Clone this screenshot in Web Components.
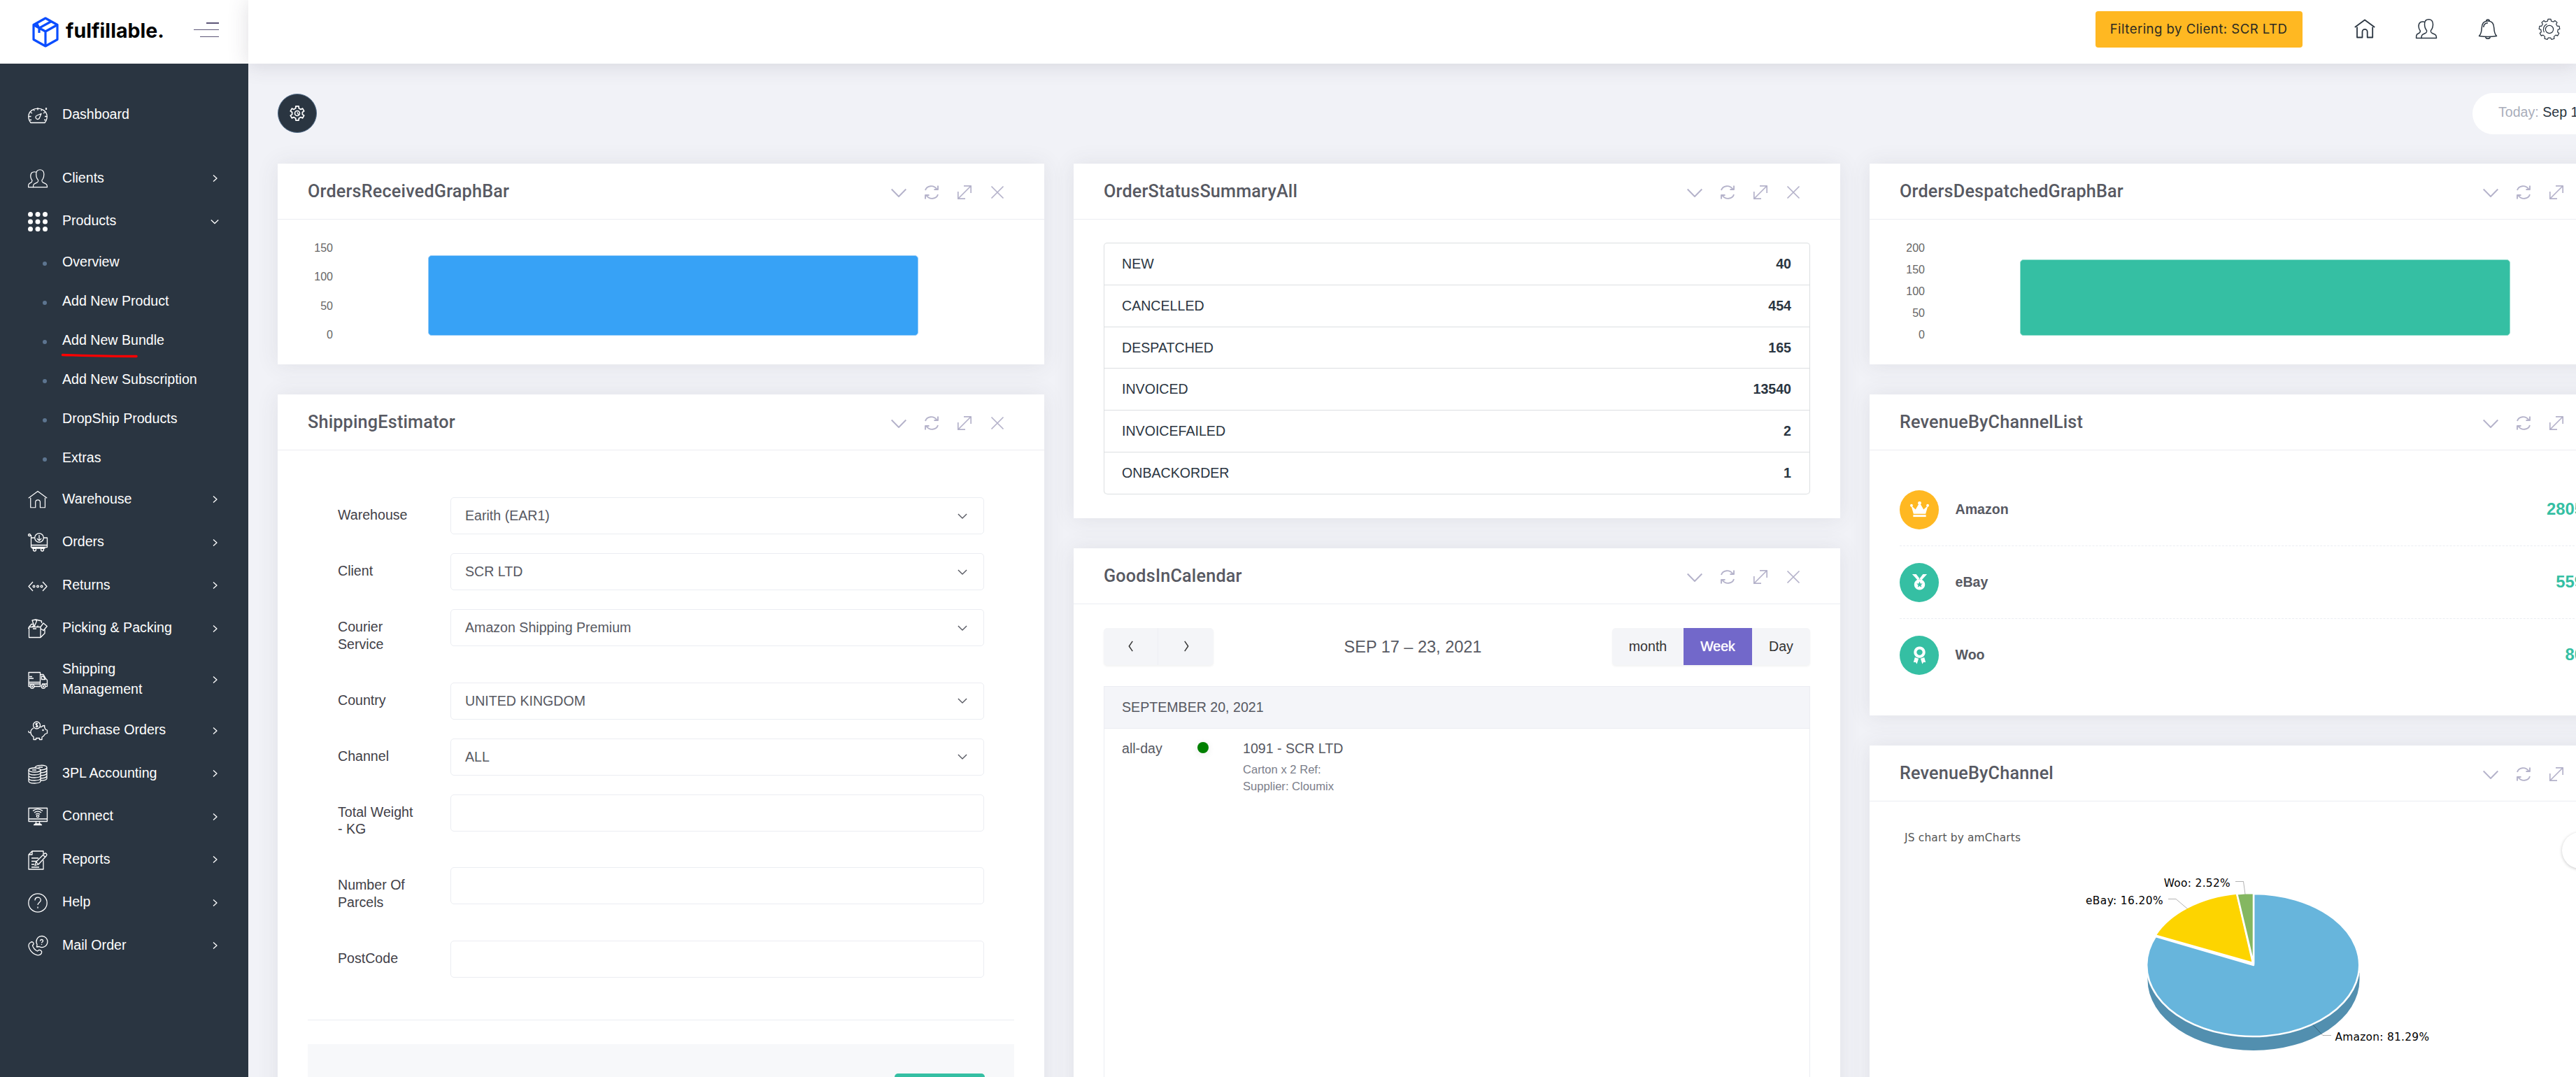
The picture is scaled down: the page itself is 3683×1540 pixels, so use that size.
<!DOCTYPE html>
<html lang="en">
<head>
<meta charset="utf-8">
<title>fulfillable.</title>
<style>
  html, body {
    margin: 0;
    height: 100%;
    overflow: hidden;
  }
  body {
    font-family: "Liberation Sans", Arial, sans-serif;
    font-size: 19.6px;
    color: #2a3541;
    background: #f1f2f7;
  }
</style>
</head>
<body>
<app-shell>
  <top-bar slot="top"></top-bar>
  <side-menu slot="side"></side-menu>

  <div slot="col1">
    <widget-card heading="OrdersReceivedGraphBar">
      <bar-chart labels="150,100,50,0" height="115" color="#37a2f6" edge="#98cdf8"></bar-chart>
    </widget-card>
    <widget-card heading="ShippingEstimator">
      <shipping-form></shipping-form>
    </widget-card>
  </div>

  <div slot="col2">
    <widget-card heading="OrderStatusSummaryAll">
      <status-list>
        <status-row count="40">NEW</status-row>
        <status-row count="454">CANCELLED</status-row>
        <status-row count="165">DESPATCHED</status-row>
        <status-row count="13540">INVOICED</status-row>
        <status-row count="2">INVOICEFAILED</status-row>
        <status-row count="1">ONBACKORDER</status-row>
      </status-list>
    </widget-card>
    <widget-card heading="GoodsInCalendar">
      <goods-calendar></goods-calendar>
    </widget-card>
  </div>

  <div slot="col3">
    <widget-card heading="OrdersDespatchedGraphBar">
      <bar-chart labels="200,150,100,50,0" height="109" color="#35bfa3" edge="#8ddccb"></bar-chart>
    </widget-card>
    <widget-card heading="RevenueByChannelList">
      <revenue-list>
        <revenue-row icon="crown" color="#ffb822" amount="2805">Amazon</revenue-row>
        <revenue-row icon="medal" color="#35bfa3" amount="559">eBay</revenue-row>
        <revenue-row icon="award" color="#35bfa3" amount="80">Woo</revenue-row>
      </revenue-list>
    </widget-card>
    <widget-card heading="RevenueByChannel">
      <pie-chart></pie-chart>
    </widget-card>
  </div>
</app-shell>

<script>
// outline of a cog, n teeth between radius a and b
function cog(c, a, b, n) {
  const pts = [];
  const step = Math.PI * 2 / n;
  for (let i = 0; i < n; i++) {
    [[-0.3, a], [-0.2, b], [0.2, b], [0.3, a]].forEach(([o, r]) => {
      const t = (i + o) * step;
      pts.push((c + r * Math.sin(t)).toFixed(2) + ' ' + (c - r * Math.cos(t)).toFixed(2));
    });
  }
  return 'M' + pts.join('L') + 'z';
}

// every icon: [viewBox size, markup]
const icons = {
  box: [44, '<g stroke="#0b4dff" stroke-width="3.2"><path d="M22 2L39 11.500V32.500L22 42 5 32.500V11.500z"/><path d="M5 11.500L22 21 39 11.500M22 21V42M13 16.200L30.500 6.500M9.500 9.500L13 16.200V23"/></g>'],
  home: [30, '<path d="M.8 12L15 1.500 29.200 12"/><path d="M4 11.500V26.500H11.500V18.500a3.600 3.600 0 0 1 7.200 0V26.500H26.200V11.500"/>'],
  users: [30, '<path d="M8 27.500h21.500c0-4-1-5-5-6.500-3-1.200-3.500-2-3-4.500 2.500-2.500 3-6 3-9C24.500 3 22 .8 18.500.8S12.500 3 12.500 7.500c0 3 .6 6.500 3 9 .5 2.500 0 3.300-3 4.500-4 1.500-4.500 2.500-4.500 6.500z"/><path d="M12.800 4.600C11.500 4 8.500 4 6.500 4.800 4.500 6 4 8 4 10.500c0 2.500.8 4.500 2.300 6.500.4 2-.3 3-2.800 4C1 22.200.6 23.200.6 27.500h8"/>'],
  bell: [30, '<path d="M12.500 3a2.600 2.600 0 0 1 5 0M2.500 24.500C5 22 6 19 6.200 13 6.500 6 10 3 15 3s8.500 3 8.800 10c.2 6 1.200 9 3.700 11.500-7 1.200-18 1.200-25 0zM11.500 25.500c.8 3.800 6.200 3.800 7 0M8.800 12C9 8.500 11 6 15 5.800"/>'],
  cog: [30, `<path d="${cog(15, 12.2, 14.8, 9)}"/><circle cx="15" cy="15" r="5.600"/><path d="M11.500 7.200a8.500 8.500 0 0 0-4 12"/>`],
  cogSmall: [24, `<path stroke-width="1.900" d="${cog(12, 8.2, 11.2, 6)}"/><circle cx="12" cy="12" r="3.800" stroke-width="1.800"/><path stroke-width="1.500" d="M12 10.500l2 4"/>`],
  gauge: [28, '<path d="M4 24.500h20c3-3.500 3.700-7.500 3-11.500A13.200 10.800 0 0 0 1 13c-.7 4 0 8 3 11.500z"/><path d="M14 3v3.500M8 5l1.200 2.500M3.500 9.500L6 11M1 15.500h3.500M27.500 15.500H24M2.500 20.500h2.500M25.500 20.500H23M20 5l-1.200 2.500M24.500 9.500L22 11"/><path d="M19 11.500l-2.500 6a2.800 2.800 0 1 1-3.500-3.500z"/><path d="M25 3.500l2 2M27 3.500l-2 2"/>'],
  dots: [28, '<g fill="#fff" stroke="none"><circle cx="3.500" cy="3.500" r="3.500"/><circle cx="14" cy="3.500" r="3.500"/><circle cx="24.500" cy="3.500" r="3.500"/><circle cx="3.500" cy="14" r="3.500"/><circle cx="14" cy="14" r="3.500"/><circle cx="24.500" cy="14" r="3.500"/><circle cx="3.500" cy="24.500" r="3.500"/><circle cx="14" cy="24.500" r="3.500"/><circle cx="24.500" cy="24.500" r="3.500"/></g>'],
  cart: [28, '<circle cx="2" cy="3" r="1.500"/><path d="M3.500 3.500h1V20.500H27.500V7H22M9.500 7H5M4.500 17.500h23M5.500 22h19"/><circle cx="16" cy="7" r="6.300"/><path d="M16 3v7.500M12.800 8l3.200 3 3.200-3"/><circle cx="9.500" cy="24" r="2"/><circle cx="20.500" cy="24" r="2"/>'],
  returns: [28, '<path d="M7 8L1 14.500 7 21M21 8l6 6.500L21 21"/><circle cx="8.500" cy="14.500" r="1.400"/><circle cx="14" cy="14.500" r="1.400"/><circle cx="19.500" cy="14.500" r="1.400"/>'],
  parcel: [28, '<path d="M1.500 11.500H18V26.500H1.500zM18 26.500l6-6V14M1.500 11.500L.5 14M1.500 11.500L5 7.500h3M6.500 11L8.500 9 6 2l5-1 1.500 2L9 11M12.500 3L11.500 1l8 2v3M14 9.500V11M18 11.500l4-5.500 5.300 4.500L22 16.500 18.500 14M7 14h5"/>'],
  truck: [28, '<path d="M3 23.500H1V3.500H17.500V23.500H8.500M17.500 6.500h4.500l3.500 6 2 2V23.500h-2M19.500 13.500V9H22l2.500 4.500zM1 17.500h16M1 20h16M2 9.500h4M2 12h6M20 20h7"/><circle cx="6" cy="23.500" r="2.800"/><circle cx="22" cy="23.500" r="2.800"/><circle cx="6" cy="23.500" r=".7"/><circle cx="22" cy="23.500" r=".7"/>'],
  piggy: [28, '<circle cx="12.500" cy="6" r="5"/><path d="M14 4.200c-.8-1.200-3-1-3 .3 0 1.500 3 1.200 3 2.900 0 1.400-2.500 1.300-3 .1M12.500 2.800v6.400"/><path d="M8 10c-3 1.500-4.500 4-4 7 .4 3 2 4.500 4 5.500v4h3.500v-2h5v2H20v-3.500c2-1 3.500-2.500 4.500-4.500l3-1v-4.500l-2.500-1c-.3-1-.6-2-1.300-2.800V6.500c-2 0-3.700.8-4.500 2h-2M3.500 16.500c-2 .5-3-.5-2.500-2.500"/><circle cx="21.500" cy="13" r=".6"/>'],
  coins: [28, '<ellipse cx="9.500" cy="8" rx="8.500" ry="3"/><path d="M1 8v16c0 4 17 4 17 0V8M1 12c0 4 17 4 17 0M1 16c0 4 17 4 17 0M1 20c0 4 17 4 17 0M10 5C10 .2 27 .2 27 4v16c0 2-4.500 3-9 3M18 8c5 0 9-1.500 9-4M18 12c5 0 9-1.500 9-4M18 16c5 0 9-1.500 9-4M18 20c5 0 9-1.500 9-4M6 8h6M15 4h6"/>'],
  monitor: [28, '<path d="M1 1.500H27.500V20.500H1zM1 17h26.500M11.500 20.500v3.500M16.500 20.500v3.500M8.500 25.500l2-1.500h7l2 1.500z"/><circle cx="14" cy="13" r="1.700"/><path d="M11 10.500a4.500 4.500 0 0 1 6 0M9 8a7.500 7.500 0 0 1 10 0M7 5.500a10.500 10.500 0 0 1 14 0"/>'],
  report: [28, '<path d="M22 14V27H1V6L6 1H22V5M6 1v5H1M5 11h10M5 15.500h8M5 20h4M5 24h11"/><path d="M10 21.500l1.500-5L23.500 4.500c2-1.500 4.500 1 3 3L15 20zM11.500 16.500L15 20M21.500 6.500L25 10"/>'],
  help: [28, '<circle cx="14" cy="14" r="13.200"/><path d="M10 10.500c0-6 8.300-5.500 8.300-.5 0 3.200-4.300 3.700-4.300 7M14 19.500v2.300"/>'],
  phone: [28, '<path d="M4 8.500c2-2 4.500.5 4 2.500l-1.500 2c.5 3 4 7 7 8l2-1.500c2.500-.5 5 2 4 4-1.500 4-6 4-10 1.800C5 23 1.500 18 1 14c-.3-2.500 1-4.500 3-5.500z"/><path d="M12.500 15l.5-3.500a8 8 0 1 1 3 3z"/><path d="M17.500 6.500c0-2.800 4-2.500 4 0 0 1.500-2 1.500-2 3M19.500 11v1"/>'],
  right: [12, '<path d="M4 1.500L9 6l-5 4.500"/>'],
  down: [12, '<path d="M.8 3.500L6 8.500l5.200-5"/>'],
  chevron: [22, '<path d="M.7 6.500L11 17 21.300 6.500"/>'],
  refresh: [22, '<path d="M2 8C4 1 14 0 18.500 6.500M20 14C18 21 8 22 3.500 15.500M20 1.500v5.500h-5.500M2 20.500v-5.500h5.500"/>'],
  expand: [22, '<path d="M2 20L20 2M10 1.800h10.200V12M1.800 10v10.200H12"/>'],
  close: [22, '<path d="M2.500 2.500l17 17M19.500 2.500l-17 17"/>'],
  prev: [20, '<path d="M12.500 2L7 10l5.500 8"/>'],
  next: [20, '<path d="M7.500 2L13 10l-5.500 8"/>'],
  crown: [28, '<g fill="#fff" stroke="none"><path d="M1.500 8L8 14 14 4l6 10 6.500-6L23 20.500H5z"/><circle cx="2" cy="8" r="2"/><circle cx="14" cy="4.500" r="2.500"/><circle cx="26" cy="8" r="2"/><path d="M4.500 22h19v3H4.500z"/></g>'],
  medal: [28, '<g fill="#fff" stroke="none"><path d="M3 2h6l5 6.500L11 11zM25 2h-6l-5 6.500 3 2.500z"/><path fill-rule="evenodd" d="M14 9.500a8 8 0 1 1-.01 0zM14 13l-1.300 3-3.200.2 2.500 2-.8 3.200 2.800-1.800 2.800 1.800-.8-3.200 2.500-2-3.200-.2z"/></g>'],
  award: [28, '<g fill="#fff" stroke="none"><path fill-rule="evenodd" d="M14 1.500a8.500 8.500 0 1 1-.01 0zM14 5.700a4.300 4.300 0 1 0 .01 0z"/><path d="M7 17.500l5.500 2-2.500 8-2-3-3 .5zM21 17.500l-5.500 2 2.500 8 2-3 3 .5z"/></g>']
};

class UiIcon extends HTMLElement {
  connectedCallback() {
    const [box, markup] = icons[this.getAttribute('name')];
    const size = this.getAttribute('size') || box;
    this.attachShadow({ mode: 'open' }).innerHTML = `
      <style>
        :host { display: block; flex: none; width: ${size}px; height: ${size}px; }
        svg { display: block; overflow: visible; fill: none; stroke: currentColor; stroke-width: ${this.getAttribute('weight') || 1.3}; stroke-linejoin: round; }
      </style>
      <svg width="${size}" height="${size}" viewBox="0 0 ${box} ${box}">${markup}</svg>`;
  }
}
customElements.define('ui-icon', UiIcon);

class AppShell extends HTMLElement {
  constructor() {
    super();
    this.attachShadow({ mode: 'open' }).innerHTML = `
      <style>
        :host { display: flex; flex-direction: column; height: 100vh; overflow: hidden; }
        .body { display: flex; flex: 1; min-height: 0; }
        main { flex: 1; min-width: 0; overflow: hidden; padding: 42px 0 0 42px; box-sizing: border-box; }
        .bar { display: flex; justify-content: space-between; align-items: flex-start; height: 101px; }
        .gear {
          display: flex; align-items: center; justify-content: center;
          box-sizing: border-box; width: 56px; height: 56px; margin-top: 1px;
          border: 1px solid #506b88; border-radius: 50%; background: #2a3541; color: #fff;
        }
        .today {
          box-sizing: border-box; width: 148px; height: 59px; padding-left: 37px;
          border-radius: 30px 0 0 30px; background: #fff; line-height: 55px; white-space: nowrap;
        }
        .today span { color: #a9adba; }
        .cols { display: grid; grid-template-columns: repeat(3, 1096px); gap: 42px; }
        ::slotted(div) { display: flex; flex-direction: column; gap: 43px; }
      </style>
      <slot name="top"></slot>
      <div class="body">
        <slot name="side"></slot>
        <main>
          <div class="bar">
            <div class="gear"><ui-icon name="cogSmall" size="22"></ui-icon></div>
            <div class="today"><span>Today:</span> Sep 1</div>
          </div>
          <div class="cols">
            <slot name="col1"></slot>
            <slot name="col2"></slot>
            <slot name="col3"></slot>
          </div>
        </main>
      </div>`;
  }
}
customElements.define('app-shell', AppShell);

class TopBar extends HTMLElement {
  constructor() {
    super();
    this.attachShadow({ mode: 'open' }).innerHTML = `
      <style>
        :host { display: flex; height: 91px; flex: none; background: #fff; position: relative; z-index: 1; }
        .brand { display: flex; align-items: center; width: 355px; box-sizing: border-box; padding-left: 43px; }
        .name { width: 143px; margin: 0 0 5px 7px; font: 700 28.5px Inter, sans-serif; letter-spacing: 0.05px; color: #000; white-space: nowrap; }
        .burger { display: flex; flex-direction: column; align-items: flex-end; width: 36px; margin: -6px 0 0 40px; }
        i { display: block; height: 1px; width: 36px; background: #5c5577; }
        i:first-child { height: 2px; width: 18px; }
        i:nth-child(2) { margin: 8px 0 9px; }
        i:last-child { width: 27px; }
        nav {
          display: flex; flex: 1; align-items: center; justify-content: flex-end; gap: 58px;
          padding: 0 23.5px 8px 0; box-shadow: 0 1px 28px 1px rgba(69, 65, 78, .16);
        }
        .filter {
          box-sizing: border-box; width: 296px; height: 52px; margin: 1px 16px 0 0; border-radius: 4px; background: #ffb822;
          color: #2a2a22; font: 18.6px/51px Inter, sans-serif; letter-spacing: .45px; text-align: center; white-space: nowrap;
        }
      </style>
      <div class="brand">
        <ui-icon name="box"></ui-icon>
        <span class="name">fulfillable.</span>
        <div class="burger"><i></i><i></i><i></i></div>
      </div>
      <nav>
        <div class="filter">Filtering by Client: SCR LTD</div>
        <ui-icon name="home" weight="1.8"></ui-icon>
        <ui-icon name="users" weight="1.5"></ui-icon>
        <ui-icon name="bell" weight="1.5"></ui-icon>
        <ui-icon name="cog" weight="1.2"></ui-icon>
      </nav>`;
  }
}
customElements.define('top-bar', TopBar);

class MenuItem extends HTMLElement {
  connectedCallback() {
    const arrow = this.getAttribute('arrow');
    this.attachShadow({ mode: 'open' }).innerHTML = `
      <style>
        :host { display: flex; align-items: center; box-sizing: border-box; height: 61.5px; padding: 0 42px 1.5px 40px; line-height: 29px; color: #fff; }
        :host([tall]) { height: 84.5px; }
        .icon { margin: 3px 21px 0 0; }
        span { flex: 1; max-width: 165px; }
        .arrow { margin: 2px 0 0 auto; }
      </style>
      <ui-icon class="icon" size="28" name="${this.getAttribute('icon')}"></ui-icon>
      <span><slot></slot></span>
      ${arrow ? `<ui-icon class="arrow" name="${arrow}" weight="1.3"></ui-icon>` : ''}`;
  }
}
customElements.define('menu-item', MenuItem);

class SubItem extends HTMLElement {
  constructor() {
    super();
    this.attachShadow({ mode: 'open' }).innerHTML = `
      <style>
        :host { display: flex; align-items: center; box-sizing: border-box; height: 56px; padding: 0 0 2px 61px; color: #fff; position: relative; }
        i { width: 6px; height: 6px; margin: 5px 22px 0 0; border-radius: 50%; background: #5d7590; }
        svg { display: none; position: absolute; left: 86px; top: 45px; }
        :host([marked]) svg { display: block; }
      </style>
      <i></i><slot></slot>
      <svg width="114" height="12" fill="none" stroke="#f00" stroke-width="3.400" stroke-linecap="round"><path d="M3.500 3.500C40 4.500 70 5.500 109 5.500"/></svg>`;
  }
}
customElements.define('sub-item', SubItem);

class SideMenu extends HTMLElement {
  constructor() {
    super();
    this.attachShadow({ mode: 'open' }).innerHTML = `
      <style>
        :host { display: block; flex: none; box-sizing: border-box; width: 355px; padding-top: 42px; background: #2a3541; position: relative; z-index: 2; }
        .first { margin-bottom: 29.5px; }
      </style>
      <menu-item class="first" icon="gauge">Dashboard</menu-item>
      <menu-item icon="users" arrow="right">Clients</menu-item>
      <menu-item icon="dots" arrow="down">Products</menu-item>
      <sub-item>Overview</sub-item>
      <sub-item>Add New Product</sub-item>
      <sub-item marked>Add New Bundle</sub-item>
      <sub-item>Add New Subscription</sub-item>
      <sub-item>DropShip Products</sub-item>
      <sub-item>Extras</sub-item>
      <menu-item icon="home" arrow="right">Warehouse</menu-item>
      <menu-item icon="cart" arrow="right">Orders</menu-item>
      <menu-item icon="returns" arrow="right">Returns</menu-item>
      <menu-item icon="parcel" arrow="right">Picking &amp; Packing</menu-item>
      <menu-item tall icon="truck" arrow="right">Shipping Management</menu-item>
      <menu-item icon="piggy" arrow="right">Purchase Orders</menu-item>
      <menu-item icon="coins" arrow="right">3PL Accounting</menu-item>
      <menu-item icon="monitor" arrow="right">Connect</menu-item>
      <menu-item icon="report" arrow="right">Reports</menu-item>
      <menu-item icon="help" arrow="right">Help</menu-item>
      <menu-item icon="phone" arrow="right">Mail Order</menu-item>`;
  }
}
customElements.define('side-menu', SideMenu);

class WidgetCard extends HTMLElement {
  connectedCallback() {
    this.attachShadow({ mode: 'open' }).innerHTML = `
      <style>
        :host { display: block; background: #fff; box-shadow: 0 1px 30px 1px rgba(69, 65, 78, .09); }
        header { display: flex; align-items: center; height: 79px; padding: 0 56px 0 43px; border-bottom: 1px solid #ebedf2; }
        h3 { flex: 1; margin: 0; font: 500 25.2px Roboto, sans-serif; letter-spacing: .2px; color: #575962; }
        .tools { display: flex; gap: 25px; padding-top: 3px; color: #b4b2ca; }
      </style>
      <header>
        <h3>${this.getAttribute('heading')}</h3>
        <div class="tools">
          <ui-icon name="chevron" weight="1.9"></ui-icon>
          <ui-icon name="refresh" weight="1.9"></ui-icon>
          <ui-icon name="expand" weight="1.7"></ui-icon>
          <ui-icon name="close" weight="1.7"></ui-icon>
        </div>
      </header>
      <slot></slot>`;
  }
}
customElements.define('widget-card', WidgetCard);

class BarChart extends HTMLElement {
  connectedCallback() {
    const labels = this.getAttribute('labels').split(',');
    this.attachShadow({ mode: 'open' }).innerHTML = `
      <style>
        :host { display: flex; box-sizing: border-box; height: 207px; padding: 31px 0 32px 43px; }
        .axis { display: flex; flex-direction: column; justify-content: space-between; width: 36px; text-align: right; font-size: 16px; line-height: 20px; color: #666; }
        .bar {
          box-sizing: border-box; width: 701px; height: ${this.getAttribute('height')}px; margin: 0 0 9px 136px; align-self: flex-end;
          border: 1px solid ${this.getAttribute('edge')}; border-radius: 5px; background: ${this.getAttribute('color')};
        }
      </style>
      <div class="axis">${labels.map(l => `<span>${l}</span>`).join('')}</div>
      <div class="bar"></div>`;
  }
}
customElements.define('bar-chart', BarChart);

class FormRow extends HTMLElement {
  connectedCallback() {
    this.attachShadow({ mode: 'open' }).innerHTML = `
      <style>
        :host { display: grid; grid-template-columns: 161px 763px; align-items: start; margin-bottom: 27.15px; }
        label { padding: 13px 46px 15.7px 0; line-height: 24.3px; color: #3f4047; }
        .field { display: flex; align-items: center; justify-content: space-between; box-sizing: border-box; height: 53px; padding: 0 23px 0 20px; border: 1px solid #ebedf2; border-radius: 5px; color: #575962; }
      </style>
      <label>${this.getAttribute('label')}</label>
      <div class="field"><slot></slot>${this.hasAttribute('select') ? '<ui-icon name="down" size="14" weight="1.2"></ui-icon>' : ''}</div>`;
  }
}
customElements.define('form-row', FormRow);

class ShippingForm extends HTMLElement {
  constructor() {
    super();
    this.attachShadow({ mode: 'open' }).innerHTML = `
      <style>
        :host { display: block; padding: 67px 43px 0; }
        .rows { padding: 0 43px 33px; border-bottom: 1px solid #ebedf2; }
        .foot { display: flex; justify-content: flex-end; height: 160px; margin-top: 34px; padding: 42px 42px 0 0; background: #f7f8fa; box-sizing: border-box; }
        .btn { width: 129px; height: 50px; border-radius: 5px; background: #35bfa3; }
      </style>
      <div class="rows">
        <form-row select label="Warehouse">Earith (EAR1)</form-row>
        <form-row select label="Client">SCR LTD</form-row>
        <form-row select label="Courier Service">Amazon Shipping Premium</form-row>
        <form-row select label="Country">UNITED KINGDOM</form-row>
        <form-row select label="Channel">ALL</form-row>
        <form-row label="Total Weight - KG"></form-row>
        <form-row label="Number Of Parcels"></form-row>
        <form-row label="PostCode"></form-row>
      </div>
      <div class="foot"><div class="btn"></div></div>`;
  }
}
customElements.define('shipping-form', ShippingForm);

class StatusList extends HTMLElement {
  constructor() {
    super();
    this.attachShadow({ mode: 'open' }).innerHTML = `
      <style>
        :host { display: block; padding: 33px 43px 34.2px; }
        .list { border: 1px solid #dcdfe1; border-bottom: 0; border-radius: 5px; }
      </style>
      <div class="list"><slot></slot></div>`;
  }
}
customElements.define('status-list', StatusList);

class StatusRow extends HTMLElement {
  connectedCallback() {
    this.attachShadow({ mode: 'open' }).innerHTML = `
      <style>
        :host { display: flex; justify-content: space-between; height: 58.8px; padding: 0 26px 0 25px; line-height: 59px; border-bottom: 1px solid #dcdfe1; color: #2a3541; }
        :host(:last-child) { border-radius: 0 0 5px 5px; }
      </style>
      <slot></slot><b>${this.getAttribute('count')}</b>`;
  }
}
customElements.define('status-row', StatusRow);

class GoodsCalendar extends HTMLElement {
  constructor() {
    super();
    this.attachShadow({ mode: 'open' }).innerHTML = `
      <style>
        :host { display: block; padding: 34px 43px 0; color: #575962; }
        .bar { display: flex; justify-content: space-between; align-items: center; height: 53px; }
        .group { display: flex; height: 53px; border-radius: 5px; background: #f4f5f8; box-shadow: 0 2px 3px rgba(0, 0, 0, .05); line-height: 52px; color: #333; }
        .group > * { text-align: center; }
        .nav > * { display: flex; align-items: center; justify-content: center; width: 79px; }
        .nav > :first-child { box-sizing: border-box; width: 78px; border-right: 1px solid #eeeff4; }
        .title { font-size: 23.5px; padding: 2px 0 0; }
        .on { background: #7268ca; color: #fff; text-shadow: 0 0 1px #fff; }
        .list { height: 800px; margin-top: 30px; border: 1px solid #ebedf2; box-sizing: border-box; }
        .day { height: 59px; padding-left: 25px; line-height: 58px; background: #f4f5f9; border-bottom: 1px solid #ebedf2; }
        .event { display: grid; grid-template-columns: 107px 66px auto; padding: 16px 0 0 25px; line-height: 24px; }
        .dot { width: 16px; height: 16px; margin: 3px 0 0 1px; border-radius: 50%; background: green; box-shadow: 0 2px 10px 2px rgba(0, 0, 0, .05); }
        small { display: block; font-size: 16.6px; color: #7b7e8a; }
        small:first-of-type { margin-top: 7px; }
      </style>
      <div class="bar">
        <div class="group nav"><div><ui-icon name="prev" size="18" weight="1.6"></ui-icon></div><div><ui-icon name="next" size="18" weight="1.6"></ui-icon></div></div>
        <div class="title">SEP 17 – 23, 2021</div>
        <div class="group">
          <div style="width: 102px">month</div>
          <div class="on" style="width: 98px">Week</div>
          <div style="width: 83px">Day</div>
        </div>
      </div>
      <div class="list">
        <div class="day">SEPTEMBER 20, 2021</div>
        <div class="event">
          <span>all-day</span><div class="dot"></div>
          <div>1091 - SCR LTD<small>Carton x 2 Ref:</small><small>Supplier: Cloumix</small></div>
        </div>
      </div>`;
  }
}
customElements.define('goods-calendar', GoodsCalendar);

class RevenueList extends HTMLElement {
  constructor() {
    super();
    this.attachShadow({ mode: 'open' }).innerHTML = `
      <style>
        :host { display: block; height: 346px; padding: 33px 43px 0; }
      </style>
      <slot></slot>`;
  }
}
customElements.define('revenue-list', RevenueList);

class RevenueRow extends HTMLElement {
  connectedCallback() {
    this.attachShadow({ mode: 'open' }).innerHTML = `
      <style>
        :host { display: flex; align-items: center; height: 103.2px; border-bottom: 1px dashed #ebedf2; }
        :host(:last-child) { border: 0; }
        .badge { display: flex; align-items: center; justify-content: center; width: 56px; height: 56px; border-radius: 50%; background: ${this.getAttribute('color')}; }
        .name { flex: 1; padding: 0 0 1px 23.5px; font-weight: bold; color: #575962; }
        .amount { box-sizing: border-box; width: 85px; padding-bottom: 2px; text-align: left; font: bold 23.8px "Liberation Sans", sans-serif; color: #35bfa3; }
      </style>
      <div class="badge"><ui-icon name="${this.getAttribute('icon')}" size="27"></ui-icon></div>
      <span class="name"><slot></slot></span>
      <span class="amount">${this.getAttribute('amount')}</span>`;
    // shorter totals start one digit further right
    const short = 4 - this.getAttribute('amount').length;
    this.shadowRoot.querySelector('.amount').style.paddingLeft = short * 13.3 + 'px';
  }
}
customElements.define('revenue-row', RevenueRow);

class PieChart extends HTMLElement {
  constructor() {
    super();
    this.attachShadow({ mode: 'open' }).innerHTML = `
      <style>
        :host { display: block; position: relative; }
        svg { display: block; font: 15.4px "DejaVu Sans", Verdana, sans-serif; }
        .export {
          position: absolute; left: 990px; top: 44px; width: 52px; height: 52px; box-sizing: border-box;
          border-radius: 50%; background: #fff; box-shadow: 0 1px 4px rgba(0, 0, 0, .22);
        }
      </style>
      <svg width="1096" height="430">
        <text x="50" y="57" fill="#555" textLength="166">JS chart by amCharts</text>
        <path d="M397.500 245V255a151.500 101 0 0 0 303 0V245z" fill="#528faf"/>
        <g stroke="#fff" stroke-width="2.500" stroke-linejoin="round">
          <path d="M549 234V132a152 102 0 1 1-140 61z" fill="#67b5dc"/>
          <path d="M548 231L408.500 191.500A151 101 0 0 1 525 131.500z" fill="#fdd400"/>
          <path d="M549 232L525.300 132.200A151 101 0 0 1 549 131z" fill="#84b761"/>
        </g>
        <g fill="none" stroke="#000" stroke-opacity=".3">
          <path d="M523 114.500h11.500l2.500 18"/>
          <path d="M427 139.500h11l16.500 14"/>
          <path d="M634 319.500l14 15h12"/>
        </g>
        <text x="420.700" y="122" textLength="95">Woo: 2.52%</text>
        <text x="309" y="147" textLength="110.500">eBay: 16.20%</text>
        <text x="665.500" y="342" textLength="134.500">Amazon: 81.29%</text>
      </svg>
      <div class="export"></div>`;
  }
}
customElements.define('pie-chart', PieChart);
</script>
</body>
</html>
